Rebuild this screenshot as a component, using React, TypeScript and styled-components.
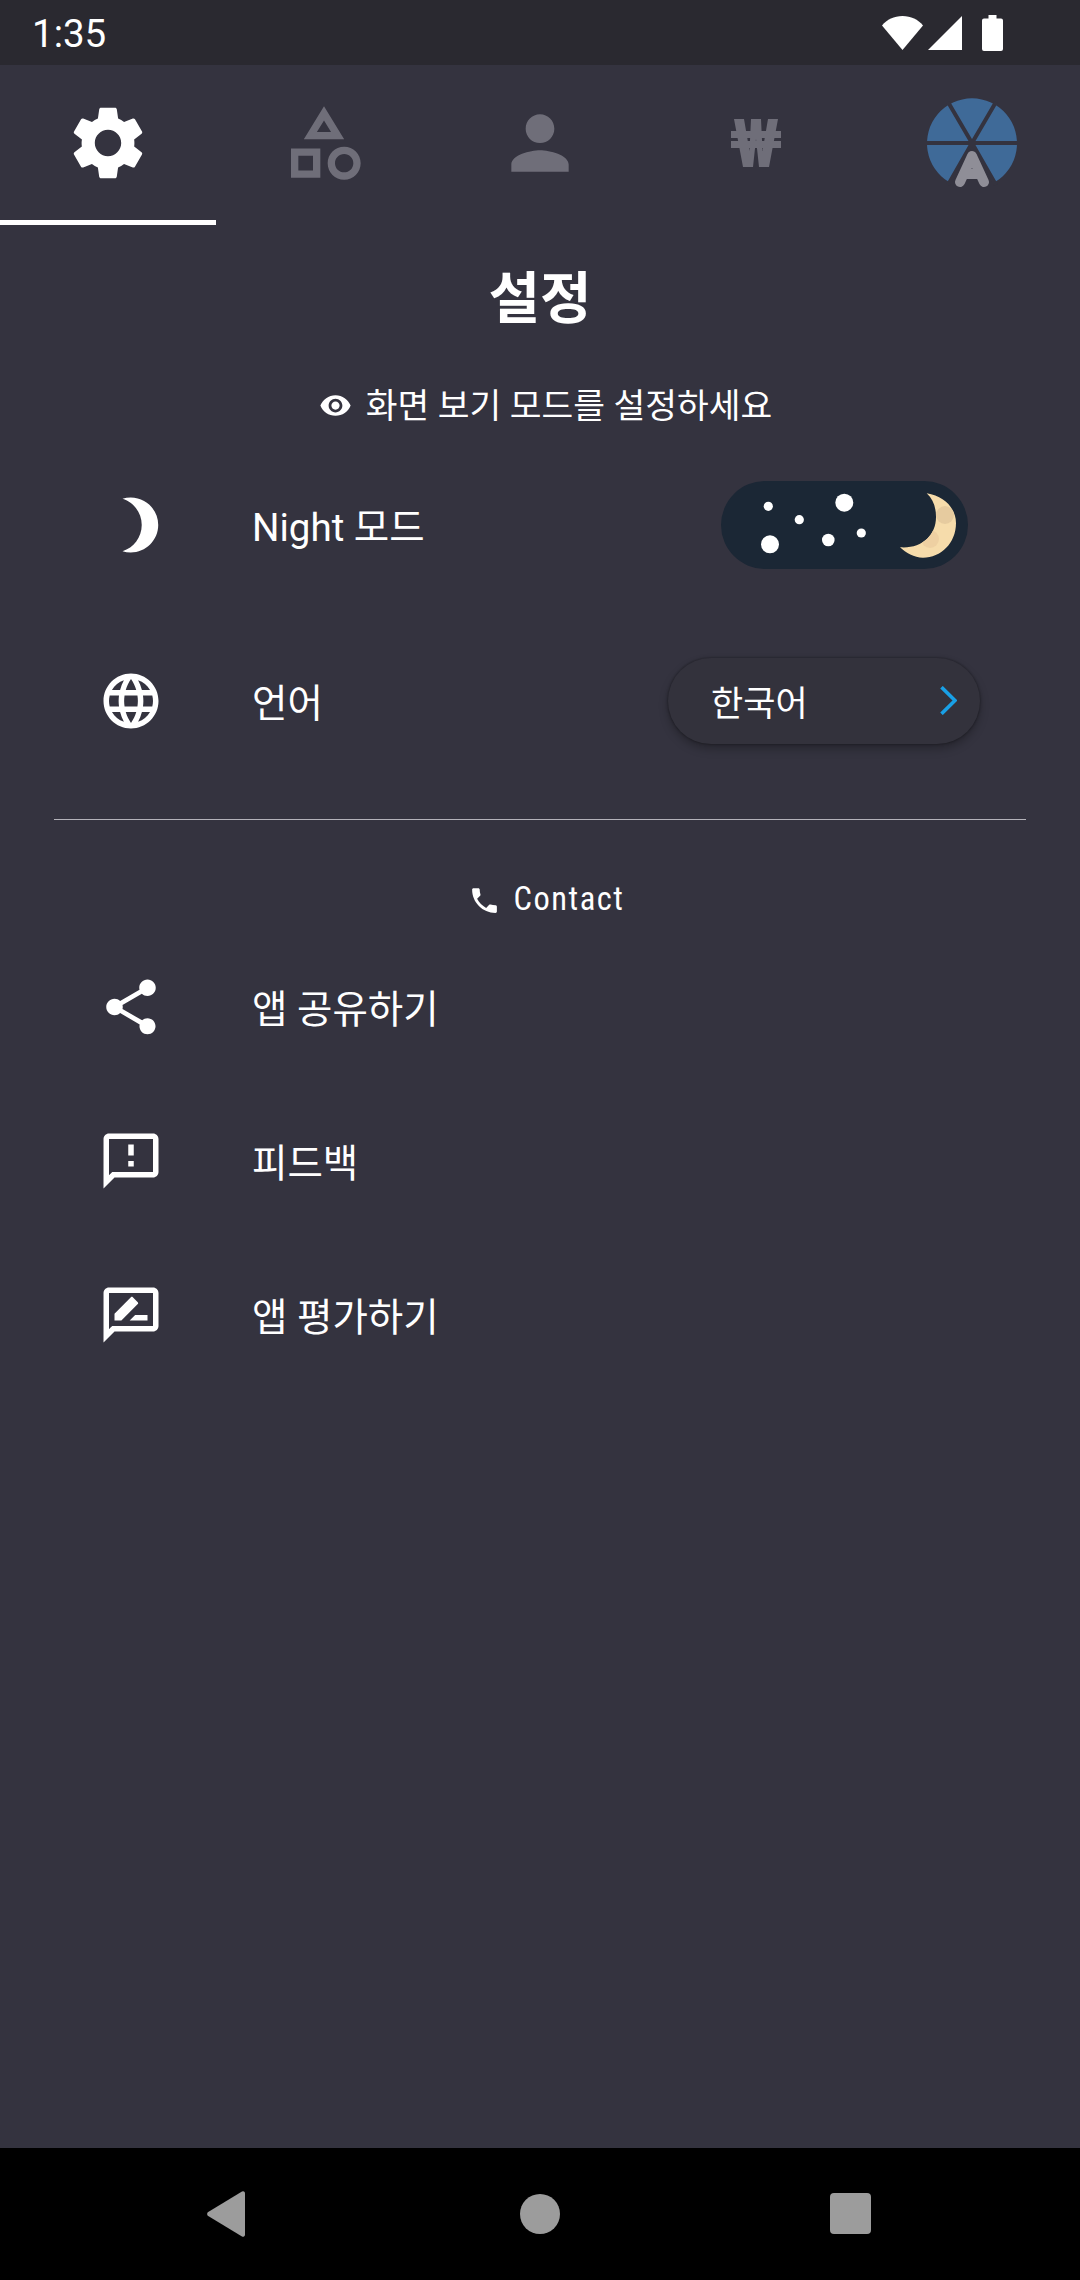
import React from "react";
import styled, { createGlobalStyle } from "styled-components";

const Global = createGlobalStyle`
  html, body { margin: 0; padding: 0; background: #34333f; }
  * { box-sizing: border-box; }
`;

const FONT = `Roboto, "Noto Sans CJK KR", sans-serif`;

const Page = styled.div`
  width: 1080px;
  height: 2280px;
  display: flex;
  flex-direction: column;
  background: #34333f;
  color: #fff;
  font-family: ${FONT};
  overflow: hidden;
`;

const StatusBar = styled.div`
  height: 65px;
  flex: none;
  background: #2a2930;
  display: flex;
  align-items: center;
  justify-content: space-between;
  padding: 0 77px 0 32px;
`;

const Clock = styled.div`
  font-size: 38.5px;
  line-height: 65px;
  padding-top: 2px;
  color: #fff;
`;

const StatusIcons = styled.div`
  display: flex;
  align-items: center;
  gap: 5px;
`;

const BatteryIcon = styled.svg`
  margin-left: 15px;
  display: block;
`;

const Tabs = styled.div`
  height: 160px;
  flex: none;
  display: grid;
  grid-template-columns: repeat(5, 216px);
`;

const Tab = styled.div<{ $active?: boolean }>`
  display: flex;
  align-items: center;
  justify-content: center;
  color: ${(p) => (p.$active ? "#ffffff" : "#6f6e79")};
  border-bottom: 5px solid ${(p) => (p.$active ? "#ffffff" : "transparent")};
`;

const Main = styled.div`
  flex: 1;
  display: flex;
  flex-direction: column;
`;

const Title = styled.h1`
  margin: 39px 0 0;
  font-size: 56px;
  line-height: 70px;
  font-weight: 700;
  text-align: center;
`;

const SectionHead = styled.div<{ $top: number; $height: number; $indent: number }>`
  margin-top: ${(p) => p.$top}px;
  height: ${(p) => p.$height}px;
  padding-left: ${(p) => p.$indent}px;
  display: flex;
  align-items: center;
  justify-content: center;
  gap: 13px;
`;

const SubText = styled.span`
  font-size: 34.5px;
  position: relative;
  top: -2px;
  left: 1px;
`;

const ContactText = styled.span`
  font-size: 32.5px;
  letter-spacing: 1.5px;
  font-stretch: 75%;
  position: relative;
  top: -1px;
`;

const Row = styled.div<{ $height: number; $gapTop?: number }>`
  height: ${(p) => p.$height}px;
  margin-top: ${(p) => p.$gapTop ?? 0}px;
  display: flex;
  align-items: center;
  padding: 0 100px 0 98px;
`;

const RowIcon = styled.svg`
  width: 66px;
  height: 66px;
  flex: none;
  display: block;
  color: #fff;
`;

const RowLabel = styled.span`
  margin-left: 88px;
  padding-top: 6px;
  flex: 1;
  font-size: 38.5px;
  line-height: 56px;
`;

const Toggle = styled.svg`
  width: 247px;
  height: 88px;
  margin-right: 12px;
  display: block;
  flex: none;
`;

const LangButton = styled.div`
  width: 312px;
  height: 86px;
  flex: none;
  display: flex;
  align-items: center;
  justify-content: space-between;
  padding: 0 23px 0 43px;
  border-radius: 43px;
  background: #33323c;
  box-shadow: 0 0 2px 1px rgba(0, 0, 0, 0.22), 0 5px 10px rgba(0, 0, 0, 0.26);
  font-size: 35px;
`;

const Divider = styled.div`
  height: 1px;
  margin: 29px 54px 0;
  background: #b4b3ba;
`;

const NavBar = styled.div`
  height: 132px;
  flex: none;
  background: #000;
  display: flex;
  align-items: center;
  justify-content: space-between;
  padding: 0 209px 1px 207px;
`;

const NavDot = styled.div`
  width: 40px;
  height: 40px;
  margin-left: 5px;
  border-radius: 50%;
  background: #9c9c9c;
`;

const NavSquare = styled.div`
  width: 41px;
  height: 41px;
  border-radius: 4px;
  background: #9c9c9c;
`;

const Icon = ({ d, size }: { d: string; size: number }) => (
  <svg width={size} height={size} viewBox="0 0 24 24" fill="currentColor" style={{ display: "block" }}>
    <path d={d} />
  </svg>
);

const GEAR =
  "M19.14 12.94c.04-.3.06-.61.06-.94 0-.32-.02-.64-.07-.94l2.03-1.58c.18-.14.23-.41.12-.61l-1.92-3.32c-.12-.22-.37-.29-.59-.22l-2.39.96c-.5-.38-1.03-.7-1.62-.94l-.36-2.54c-.04-.24-.24-.41-.48-.41h-3.84c-.24 0-.43.17-.47.41l-.36 2.54c-.59.24-1.13.57-1.62.94l-2.39-.96c-.22-.08-.47 0-.59.22L2.74 8.87c-.12.21-.08.47.12.61l2.03 1.58c-.05.3-.09.63-.09.94s.02.64.07.94l-2.03 1.58c-.18.14-.23.41-.12.61l1.92 3.32c.12.22.37.29.59.22l2.39-.96c.5.38 1.03.7 1.62.94l.36 2.54c.05.24.24.41.48.41h3.84c.24 0 .44-.17.47-.41l.36-2.54c.59-.24 1.13-.56 1.62-.94l2.39.96c.22.08.47 0 .59-.22l1.92-3.32c.12-.22.07-.47-.12-.61l-2.01-1.58zM12 15.6c-1.98 0-3.6-1.62-3.6-3.6s1.62-3.6 3.6-3.6 3.6 1.62 3.6 3.6-1.62 3.6-3.6 3.6z";
const CATEGORY =
  "M12 2l-5.5 9h11L12 2zm0 3.84L13.93 9h-3.87L12 5.84zM17.5 13c-2.49 0-4.5 2.01-4.5 4.5s2.01 4.5 4.5 4.5 4.5-2.01 4.5-4.5-2.01-4.5-4.5-4.5zm0 7c-1.38 0-2.5-1.12-2.5-2.5s1.12-2.5 2.5-2.5 2.5 1.12 2.5 2.5-1.12 2.5-2.5 2.5zM3 21.5h8v-8H3v8zm2-6h4v4H5v-4z";
const PERSON =
  "M12 12c2.21 0 4-1.79 4-4s-1.79-4-4-4-4 1.79-4 4 1.79 4 4 4zm0 2c-2.67 0-8 1.34-8 4v2h16v-2c0-2.66-5.33-4-8-4z";
const EYE =
  "M12 4.5C7 4.5 2.73 7.61 1 12c1.73 4.39 6 7.5 11 7.5s9.27-3.11 11-7.5c-1.73-4.39-6-7.5-11-7.5zM12 17c-2.76 0-5-2.24-5-5s2.24-5 5-5 5 2.24 5 5-2.24 5-5 5zm0-8c-1.66 0-3 1.34-3 3s1.34 3 3 3 3-1.34 3-3-1.34-3-3-3z";
const PHONE =
  "M6.62 10.79c1.44 2.83 3.76 5.14 6.59 6.59l2.2-2.2c.27-.27.67-.36 1.02-.24 1.12.37 2.33.57 3.57.57.55 0 1 .45 1 1V20c0 .55-.45 1-1 1-9.39 0-17-7.61-17-17 0-.55.45-1 1-1h3.5c.55 0 1 .45 1 1 0 1.25.2 2.45.57 3.57.11.35.03.74-.25 1.02l-2.2 2.2z";
const MOON =
  "M9 2c-1.05 0-2.05.16-3 .46 4.06 1.27 7 5.06 7 9.54 0 4.48-2.94 8.27-7 9.54.95.3 1.95.46 3 .46 5.52 0 10-4.48 10-10S14.52 2 9 2z";
const GLOBE =
  "M11.99 2C6.47 2 2 6.48 2 12s4.47 10 9.99 10C17.52 22 22 17.52 22 12S17.52 2 11.99 2zm6.93 6h-2.95c-.32-1.25-.78-2.45-1.38-3.56 1.84.63 3.37 1.91 4.33 3.56zM12 4.04c.83 1.2 1.48 2.53 1.91 3.96h-3.82c.43-1.43 1.08-2.76 1.91-3.96zM4.26 14C4.1 13.36 4 12.69 4 12s.1-1.36.26-2h3.38c-.08.66-.14 1.32-.14 2 0 .68.06 1.34.14 2H4.26zm.82 2h2.95c.32 1.25.78 2.45 1.38 3.56-1.84-.63-3.37-1.9-4.33-3.56zm2.95-8H5.08c.96-1.66 2.49-2.93 4.33-3.56C8.81 5.55 8.35 6.75 8.03 8zM12 19.96c-.83-1.2-1.48-2.53-1.91-3.96h3.82c-.43 1.43-1.08 2.76-1.91 3.96zM14.34 14H9.66c-.09-.66-.16-1.32-.16-2 0-.68.07-1.35.16-2h4.68c.09.65.16 1.32.16 2 0 .68-.07 1.34-.16 2zm.25 5.56c.6-1.11 1.06-2.31 1.38-3.56h2.95c-.96 1.65-2.49 2.93-4.33 3.56zM16.36 14c.08-.66.14-1.32.14-2 0-.68-.06-1.34-.14-2h3.38c.16.64.26 1.31.26 2s-.1 1.36-.26 2h-3.38z";
const SHARE =
  "M18 16.08c-.76 0-1.44.3-1.96.77L8.91 12.7c.05-.23.09-.46.09-.7s-.04-.47-.09-.7l7.05-4.11c.54.5 1.25.81 2.04.81 1.66 0 3-1.34 3-3s-1.34-3-3-3-3 1.34-3 3c0 .24.04.47.09.7L8.04 9.81C7.5 9.31 6.79 9 6 9c-1.66 0-3 1.34-3 3s1.34 3 3 3c.79 0 1.5-.31 2.04-.81l7.12 4.16c-.05.21-.08.43-.08.65 0 1.61 1.31 2.92 2.92 2.92 1.61 0 2.92-1.31 2.92-2.92s-1.31-2.92-2.92-2.92z";
const FEEDBACK =
  "M20 2H4c-1.1 0-1.99.9-1.99 2L2 22l4-4h14c1.1 0 2-.9 2-2V4c0-1.1-.9-2-2-2zm0 14H5.17L4 17.17V4h16v12zm-9-4h2v2h-2zm0-6h2v4h-2z";
const RATE =
  "M20 2H4c-1.1 0-1.99.9-1.99 2L2 22l4-4h14c1.1 0 2-.9 2-2V4c0-1.1-.9-2-2-2zm0 14H5.17l-.59.59-.58.58V4h16v12zM6 14h2.5l5.96-5.96c.2-.2.2-.51 0-.71L12.67 5.54c-.2-.2-.51-.2-.71 0L6 11.5V14zm5.5 0H18v-2h-4.5l-2 2z";

const WonIcon = () => (
  <svg width="50" height="48" viewBox="0 0 50 48" fill="currentColor" style={{ display: "block" }}>
    <path d="M3 0H13L18.5 32 20 0H30L31.5 32 37 0H47L38 48H28L25 20 22 48H12Z" />
    <path d="M0 12H50V19H0ZM0 22H50V29H0Z" />
  </svg>
);

const LogoIcon = () => (
  <svg width="92" height="92" viewBox="0 0 92 92" style={{ display: "block" }}>
    <path d="M46 46L23 85A45 45 0 1 1 69 85Z" fill="#3f6a98" />
    <path d="M0 46h92M22 5l24 41 24-41M46 46L22 88M46 46l24 42" stroke="#34333f" strokeWidth="4" fill="none" />
    <path
      d="M34 85L46 59l12 26M39 77h14"
      stroke="#8f8e97"
      strokeWidth="10"
      strokeLinecap="round"
      strokeLinejoin="round"
      fill="none"
    />
  </svg>
);

const TRAY = [
  [47.3, 25.3, 4.6],
  [78.3, 38.7, 4.6],
  [123.3, 21.7, 9],
  [140.3, 52, 4.6],
  [107.3, 59, 6.3],
  [49, 63.3, 9],
];

const App = () => (
  <Page>
    <Global />
    <StatusBar>
      <Clock>1:35</Clock>
      <StatusIcons>
        <svg width="41" height="34" viewBox="0 0 41 34" fill="#fff" style={{ display: "block" }}>
          <path d="M0 9.5C5 3.5 12 0 20.5 0S36 3.5 41 9.5L20.5 34Z" />
        </svg>
        <svg width="34" height="34" viewBox="0 0 34 34" fill="#fff" style={{ display: "block" }}>
          <path d="M34 0V34H0Z" />
        </svg>
        <BatteryIcon width="21" height="36" viewBox="0 0 21 36" fill="#fff">
          <path d="M6.5 0h8v3.5H19a2 2 0 0 1 2 2V34a2 2 0 0 1-2 2H2a2 2 0 0 1-2-2V5.5a2 2 0 0 1 2-2h4.5Z" />
        </BatteryIcon>
      </StatusIcons>
    </StatusBar>
    <Tabs>
      <Tab $active>
        <Icon d={GEAR} size={88} />
      </Tab>
      <Tab>
        <Icon d={CATEGORY} size={88} />
      </Tab>
      <Tab>
        <Icon d={PERSON} size={86} />
      </Tab>
      <Tab>
        <WonIcon />
      </Tab>
      <Tab>
        <LogoIcon />
      </Tab>
    </Tabs>
    <Main>
      <Title>설정</Title>
      <SectionHead $top={37} $height={68} $indent={10}>
        <Icon d={EYE} size={33} />
        <SubText>화면 보기 모드를 설정하세요</SubText>
      </SectionHead>
      <Row $height={172}>
        <RowIcon viewBox="-2.9 0 24 24" fill="currentColor">
          <path d={MOON} />
        </RowIcon>
        <RowLabel>Night 모드</RowLabel>
        <Toggle viewBox="0 0 247 88">
          <defs>
            <clipPath id="crescent">
              <path d="M205.7 12.3C224 15 235 28 235 42C235 62 220 76.7 202 76.7C193 76.7 185 72 179 66.3C200 68 215 55 215 36C215 26 212 18 205.7 12.3Z" />
            </clipPath>
          </defs>
          <rect width="247" height="88" rx="44" fill="#1b2735" />
          {TRAY.map(([x, y, r]) => (
            <circle key={`${x}-${y}`} cx={x} cy={y} r={r} fill="#fff" />
          ))}
          <g clipPath="url(#crescent)">
            <rect x="170" y="5" width="70" height="75" fill="#f6dcab" />
            <circle cx="224" cy="34" r="9" fill="#e6cb9f" />
            <circle cx="209" cy="58" r="9" fill="#eed0a2" />
          </g>
        </Toggle>
      </Row>
      <Row $height={179}>
        <RowIcon viewBox="0 0 24 24" fill="currentColor">
          <path d={GLOBE} />
        </RowIcon>
        <RowLabel>언어</RowLabel>
        <LangButton>
          <span>한국어</span>
          <svg width="17" height="29" viewBox="0 0 17 29" fill="none" stroke="#19a0e6" strokeWidth="3.6" style={{ display: "block" }}>
            <path d="M1.5 1.2L15 14.5 1.5 27.8" />
          </svg>
        </LangButton>
      </Row>
      <Divider />
      <SectionHead $top={58} $height={44} $indent={12}>
        <Icon d={PHONE} size={33} />
        <ContactText>Contact</ContactText>
      </SectionHead>
      <Row $height={154} $gapTop={8}>
        <RowIcon viewBox="0 0 24 24" fill="currentColor">
          <path d={SHARE} />
        </RowIcon>
        <RowLabel>앱 공유하기</RowLabel>
      </Row>
      <Row $height={154}>
        <RowIcon viewBox="0 0 24 24" fill="currentColor">
          <path d={FEEDBACK} />
        </RowIcon>
        <RowLabel>피드백</RowLabel>
      </Row>
      <Row $height={154}>
        <RowIcon viewBox="0 0 24 24" fill="currentColor">
          <path d={RATE} />
        </RowIcon>
        <RowLabel>앱 평가하기</RowLabel>
      </Row>
    </Main>
    <NavBar>
      <svg width="38" height="46" viewBox="0 0 38 46" fill="#9c9c9c" style={{ display: "block" }}>
        <path d="M35 0.6a2 2 0 0 1 3 1.7V43.7a2 2 0 0 1-3 1.7L1.2 25a2.4 2.4 0 0 1 0-4Z" />
      </svg>
      <NavDot />
      <NavSquare />
    </NavBar>
  </Page>
);

export default App;
